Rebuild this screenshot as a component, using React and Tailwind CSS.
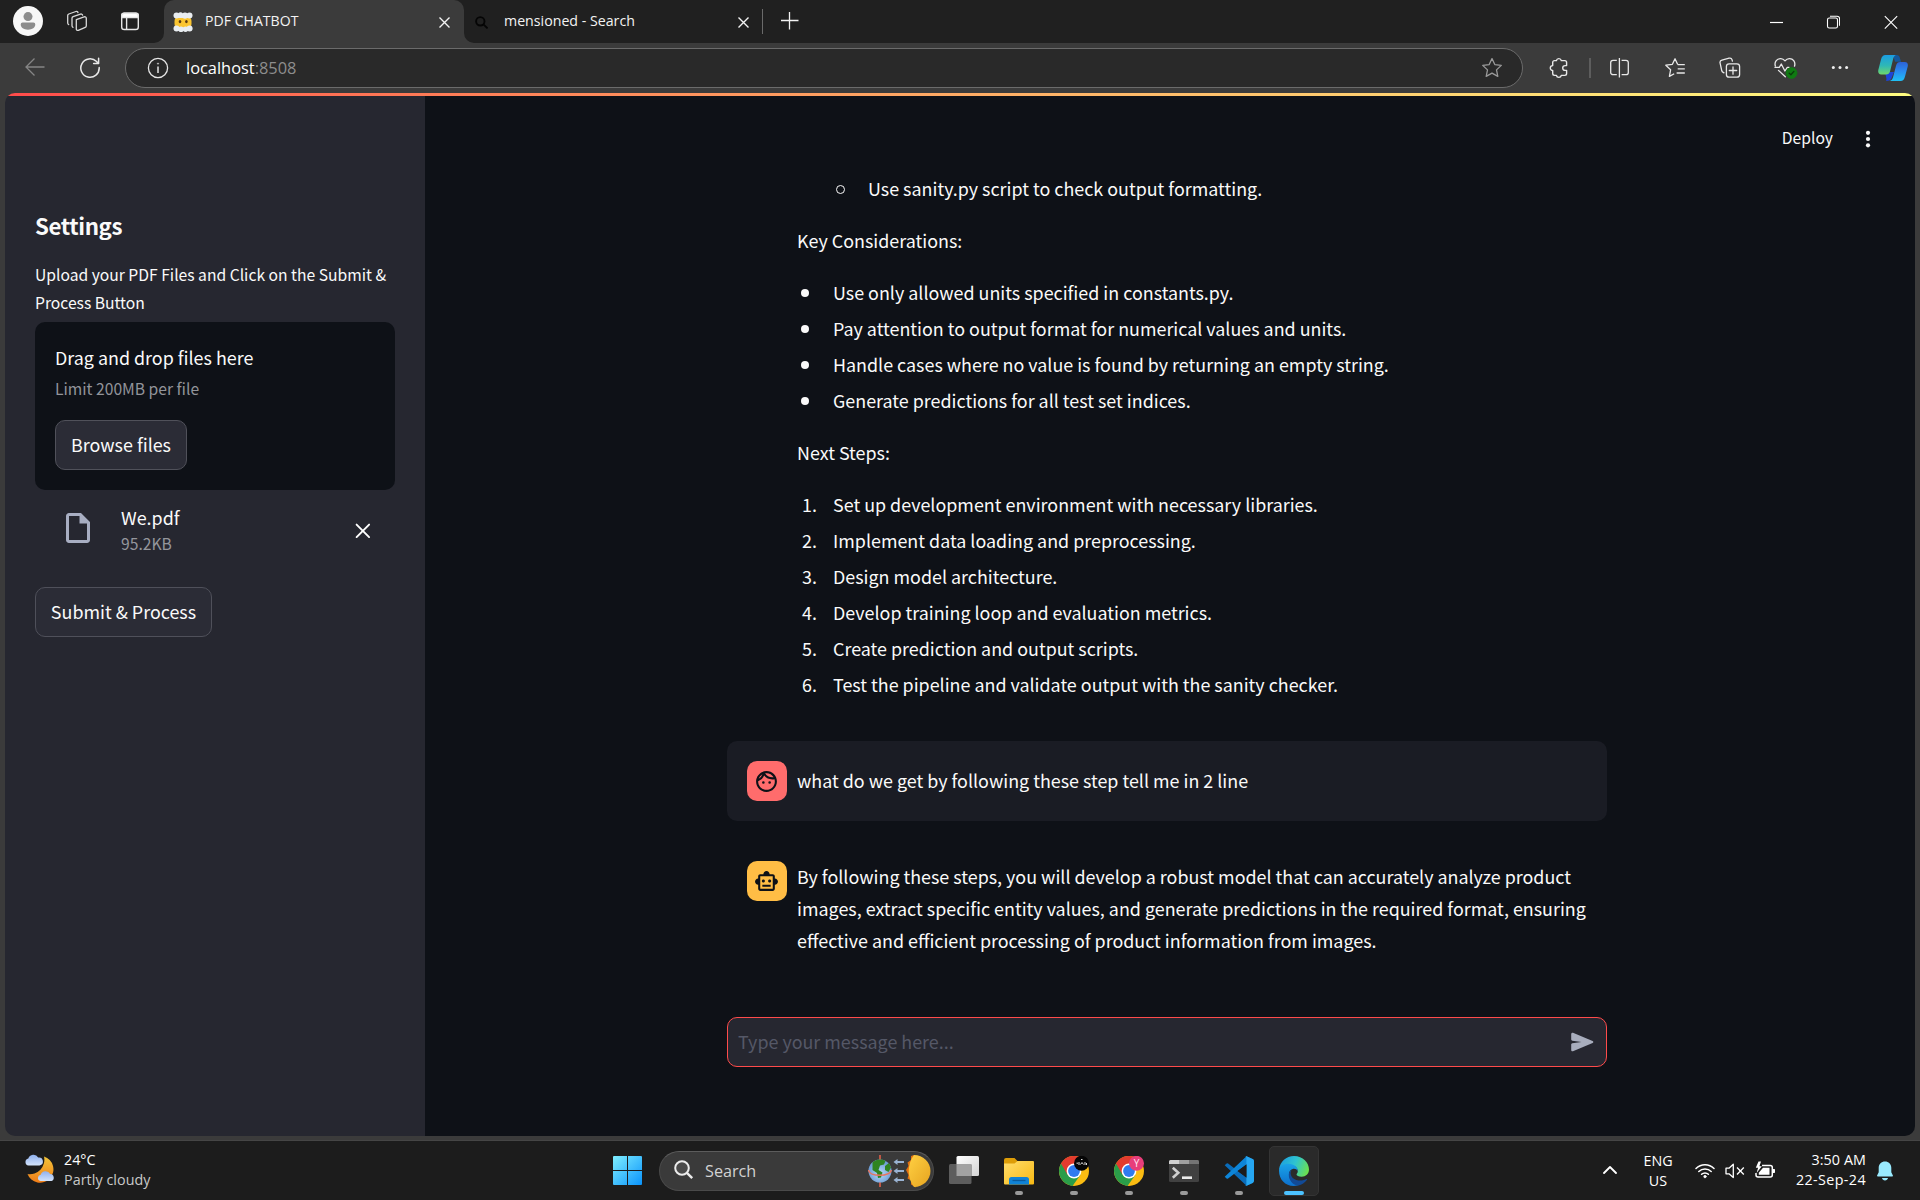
import React from 'react';
import { MdOutlineFace, MdOutlineSmartToy, MdOutlineInsertDriveFile } from 'react-icons/md';

const keyConsiderations = [
  'Use only allowed units specified in constants.py.',
  'Pay attention to output format for numerical values and units.',
  'Handle cases where no value is found by returning an empty string.',
  'Generate predictions for all test set indices.',
];

const nextSteps = [
  'Set up development environment with necessary libraries.',
  'Implement data loading and preprocessing.',
  'Design model architecture.',
  'Develop training loop and evaluation metrics.',
  'Create prediction and output scripts.',
  'Test the pipeline and validate output with the sanity checker.',
];

function CloseIcon({ className }) {
  return (
    <svg viewBox="0 0 13 13" className={className} fill="none" stroke="currentColor" strokeWidth="1.4">
      <path d="M1.5 1.5l10 10M11.5 1.5l-10 10" />
    </svg>
  );
}

function CloudFace() {
  return (
    <svg viewBox="0 0 20 20" className="h-5 w-5 shrink-0">
      <rect x="1.5" y="4" width="17" height="13" rx="5" fill="#fbc530" />
      <g fill="#e9edf1">
        <circle cx="3.5" cy="3.5" r="3" />
        <circle cx="7.5" cy="3" r="2.7" />
        <circle cx="12" cy="3.6" r="3.1" />
        <circle cx="16.5" cy="3.4" r="3" />
        <rect x="2" y="2" width="15" height="4" />
        <circle cx="3.5" cy="16.6" r="3" />
        <circle cx="8" cy="17.2" r="2.8" />
        <circle cx="12.5" cy="17.2" r="2.7" />
        <circle cx="16.6" cy="16.6" r="3" />
        <rect x="3" y="15.6" width="14" height="3" />
      </g>
      <ellipse cx="7" cy="9.6" rx="1.3" ry="1.7" fill="#5a3a12" />
      <ellipse cx="13.4" cy="9.6" rx="1.3" ry="1.7" fill="#5a3a12" />
    </svg>
  );
}

function TabStrip() {
  return (
    <div className="flex h-[43px] items-center bg-[#202020] text-[#f3f3f3]">
      <svg viewBox="0 0 30 30" className="-mt-px ml-[13px] h-[30px] w-[30px] shrink-0">
        <circle cx="15" cy="15" r="15" fill="#f7f7f7" />
        <circle cx="15" cy="10.6" r="4.5" fill="#8c8c8c" />
        <path d="M9.6 16.6h10.800a1.900 1.900 0 0 1 1.900 1.900c0 3.100-3 5.200-7.300 5.200s-7.300-2.100-7.300-5.200a1.900 1.900 0 0 1 1.900-1.900z" fill="#8c8c8c" />
      </svg>
      <svg viewBox="0 0 22 22" className="-mt-px ml-[23px] h-[22px] w-[22px] shrink-0" fill="none" stroke="#d8d8d8" strokeWidth="1.300" strokeLinejoin="round" strokeLinecap="round">
        <path d="M10.300 9.600l7.800-2.700c1.100-.4 2.200.3 2.200 1.500v7.300c0 .8-.4 1.400-1.100 1.700l-6.900 2.900c-1 .4-2-.3-2-1.400z" />
        <path d="M7 17.300c-.6-.2-1-.8-1-1.500V8.300c0-.8.400-1.300 1.100-1.600l7.400-2.600c1-.3 1.900.2 2.100 1.100" />
        <path d="M2.700 14.600c-.6-.2-1-.8-1-1.500V5.600c0-.8.400-1.300 1.100-1.600l7.100-2.500c1-.3 1.900.2 2.100 1.100" />
      </svg>
      <svg viewBox="0 0 24 24" className="-mt-px ml-[30px] h-6 w-6 shrink-0" fill="none" stroke="#e6e6e6" strokeWidth="1.400">
        <rect x="3.700" y="4.200" width="16.600" height="16.300" rx="2.600" />
        <path d="M3.700 6.800a2.600 2.600 0 0 1 2.600-2.600h11.400a2.600 2.600 0 0 1 2.600 2.600v1.700H3.700z" fill="#fff" />
        <path d="M8.600 8.500v12" />
      </svg>
      <div className="relative ml-[22px] flex h-[43px] w-[300px] shrink-0 items-center rounded-t-[10px] bg-[#3b3b3b] pr-[13px] pl-[9px]">
        <svg viewBox="0 0 10 10" className="absolute bottom-0 -left-[10px] h-[10px] w-[10px]"><path d="M10 0v10H0a10 10 0 0 0 10-10z" fill="#3b3b3b" /></svg>
        <svg viewBox="0 0 10 10" className="absolute -right-[10px] bottom-0 h-[10px] w-[10px]"><path d="M0 0v10h10A10 10 0 0 1 0 0z" fill="#3b3b3b" /></svg>
        <CloudFace />
        <span className="-mt-[2px] ml-3 text-[14.100px] leading-5 whitespace-nowrap">PDF CHATBOT</span>
        <CloseIcon className="mt-px ml-auto h-[13px] w-[13px]" />
      </div>
      <div className="flex h-[43px] w-[298px] shrink-0 items-center pr-[12px] pl-[11px]">
        <svg viewBox="0 0 13 13" className="mt-px h-[13px] w-[13px] shrink-0" fill="none" stroke="#050505" strokeWidth="1.900">
          <circle cx="5.300" cy="5.300" r="4.200" />
          <path d="M8.400 8.400l4.200 4" />
        </svg>
        <span className="-mt-[2px] ml-4 text-[14.200px] leading-5 whitespace-nowrap">mensioned - Search</span>
        <CloseIcon className="mt-px ml-auto h-[13px] w-[13px]" />
      </div>
      <div className="h-[25px] w-px bg-[#6a6a6a]" />
      <svg viewBox="0 0 18 18" className="-mt-px ml-[18px] h-[18px] w-[18px]" stroke="#f3f3f3" strokeWidth="1.300"><path d="M8.500 0v17.500M0 8.500h17.500" /></svg>
      <div className="ml-auto flex items-center pr-[22px]">
        <svg viewBox="0 0 14 14" className="h-[14px] w-[14px]" stroke="#fff" strokeWidth="1.200"><path d="M0 7.500h13" /></svg>
        <svg viewBox="0 0 14 14" className="ml-[42px] h-[14px] w-[14px]" fill="none" stroke="#fff" strokeWidth="1.100">
          <rect x="1.500" y="3" width="10" height="10" rx="1.800" />
          <path d="M4 1.200h7a2.600 2.600 0 0 1 2.600 2.600v7" />
        </svg>
        <svg viewBox="0 0 14 14" className="ml-[44px] h-[14px] w-[14px]" fill="none" stroke="#fff" strokeWidth="1.100"><path d="M.8 1.200l12.400 12.400M13.200 1.200L.8 13.600" /></svg>
      </div>
    </div>
  );
}

function Toolbar() {
  return (
    <div className="flex h-[50px] items-center bg-[#3b3b3b] text-[#e8e8e8]">
      <svg viewBox="0 0 22 22" className="ml-6 h-[22px] w-[22px] shrink-0" fill="none" stroke="#858585" strokeWidth="1.300"><path d="M20.500 10H2M10.500 1.500L2 10l8.500 8.500" /></svg>
      <svg viewBox="0 0 22 22" className="ml-[33px] h-[22px] w-[22px] shrink-0" fill="none" stroke="currentColor" strokeWidth="1.500" strokeLinecap="round" strokeLinejoin="round">
        <path d="M20.200 10.500a9.200 9.200 0 1 1-2.600-5.900l1.600 1.500" />
        <path d="M19.600 1.300v5.100h-5" />
      </svg>
      <div className="ml-6 flex h-10 w-[1398px] shrink-0 items-center rounded-full border border-[#6b6b6b] bg-[#292929] pr-[19px] pl-[21px]">
        <svg viewBox="0 0 22 22" className="h-[22px] w-[22px]" fill="none" stroke="#e6e6e6" strokeWidth="1.300">
          <circle cx="11" cy="11" r="9.600" />
          <path d="M11 9.500v6.500" strokeWidth="1.500" />
          <circle cx="11" cy="6.600" r=".7" fill="#e6e6e6" strokeWidth=".4" />
        </svg>
        <span className="ml-[17px] pb-px text-[16.400px] leading-6 text-white">localhost<span className="text-[#8d8d8d]">:8508</span></span>
        <svg viewBox="0 0 22 22" className="ml-auto h-[22px] w-[22px]" fill="none" stroke="#9a9a9a" strokeWidth="1.300" strokeLinejoin="round"><path d="M11 1.600l2.800 6 6.500.8-4.800 4.500 1.300 6.500-5.800-3.300-5.800 3.300 1.300-6.500L1.700 8.400l6.500-.8z" /></svg>
      </div>
      <svg viewBox="0 0 22 22" className="ml-[25px] h-[22px] w-[22px]" fill="none" stroke="currentColor" strokeWidth="1.400" strokeLinejoin="round">
        <path d="M8.400 3.600a2.500 2.500 0 0 1 4.900 0h3.500c1 0 1.800.8 1.800 1.800v3.200h-1.500a2.400 2.400 0 0 0 0 4.800h1.500v3.200c0 1-.8 1.800-1.800 1.800h-3.500a2.500 2.500 0 0 1-4.900 0H6.500c-1 0-1.800-.8-1.800-1.800v-3.200a2.400 2.400 0 0 1 0-4.800V5.400c0-1 .8-1.800 1.800-1.800z" />
      </svg>
      <div className="ml-[19px] h-5 w-[2px] bg-[#5d5d5d]" />
      <svg viewBox="0 0 22 22" className="ml-[18px] h-[22px] w-[22px]" fill="none" stroke="currentColor" strokeWidth="1.300">
        <path d="M7.800 3.300H4a2.300 2.300 0 0 0-2.300 2.300v9.800A2.300 2.300 0 0 0 4 17.700h3.800M12.600 3.300h4.400a2.300 2.300 0 0 1 2.300 2.300v9.800a2.300 2.300 0 0 1-2.300 2.300h-4.400M10.400 1v19.500" />
      </svg>
      <svg viewBox="0 0 22 22" className="ml-[33px] h-[22px] w-[22px]" fill="none" stroke="currentColor" strokeWidth="1.300" strokeLinejoin="round">
        <path d="M13.700 7.600H20.800M13.700 11.800H20.800M12.600 16h8.200M13.700 7.600L11 1.800 8.400 7.300l-6.600.9 4.800 4.600-1.200 6.600 4.800-2.600" />
      </svg>
      <svg viewBox="0 0 22 22" className="ml-[33px] h-[22px] w-[22px]" fill="none" stroke="currentColor" strokeWidth="1.300" strokeLinecap="round" strokeLinejoin="round">
        <path d="M5 15.800l-.8-.4a2.500 2.500 0 0 1-1.400-1.600L1.100 6.100a2.500 2.500 0 0 1 1.800-3l7.200-1.900a2.500 2.500 0 0 1 3 1.700l.3 1.200" />
        <rect x="7.400" y="6.900" width="13.200" height="13.200" rx="2.700" />
        <path d="M14 9.800v7.400M10.300 13.500h7.400" />
      </svg>
      <svg viewBox="0 0 24 24" className="ml-[33px] h-6 w-6" fill="none" stroke="currentColor" strokeWidth="1.300" strokeLinecap="round" strokeLinejoin="round">
        <path d="M1.400 10.200C-.1 5.600 3.300 2.400 6.800 2.600c2 .1 3.200 1.100 4.200 2.300 1-1.200 2.300-2.200 4.300-2.300 3.500-.2 6.600 3 5.200 7.600" />
        <path d="M1 11.400h4.300l2-3.400 3.600 7 2.400-3.700h1.800M4.500 14.400l6.800 6.400" />
        <circle cx="17.500" cy="17" r="5.500" fill="#0f7a12" stroke="#0f7a12" strokeWidth=".6" />
        <path d="M15.200 17.200l1.700 1.600 3-3.400" stroke="#0a3a0c" strokeWidth="1.300" />
      </svg>
      <svg viewBox="0 0 22 22" className="ml-[31px] h-[22px] w-[22px]" fill="#f0f0f0"><circle cx="4.300" cy="10.600" r="1.500" /><circle cx="11" cy="10.600" r="1.500" /><circle cx="17.600" cy="10.600" r="1.500" /></svg>
      <svg viewBox="0 0 30 28" className="ml-[27px] h-7 w-[30px] shrink-0">
        <defs>
          <linearGradient id="cpA" x1="0" y1="0" x2="0" y2="1"><stop offset="0" stopColor="#1b9de2" /><stop offset=".55" stopColor="#2fb8b5" /><stop offset="1" stopColor="#6fd66b" /></linearGradient>
          <linearGradient id="cpB" x1="0" y1="0" x2="0" y2="1"><stop offset="0" stopColor="#2c62d6" /><stop offset=".5" stopColor="#2a8cf0" /><stop offset="1" stopColor="#1fc0f4" /></linearGradient>
        </defs>
        <path d="M15 1h3.500c2 0 2.800 1 3.300 2.800l1.200 4h-6z" fill="#14579c" />
        <path d="M8 27c3 0 5-1 6-4l2-5H7l1.300 6c.3 1.500 0 3-.3 3z" fill="#1d44d8" />
        <path d="M7.500 1h10.300c-1.600.8-2.300 2.500-2.800 4.500l-3 12c-.6 2-1.800 3-4 3H3.200C.8 20.500-.2 18.800.3 16L3 5.500C3.800 2.500 5 1 7.500 1z" fill="url(#cpA)" />
        <path d="M22.300 8h4.500c2.400 0 3.500 1.700 2.900 4.500l-2.700 10c-.8 3-2 4.500-4.500 4.500H11.500c2-.5 3-1.800 3.600-4l3-11.500C18.800 9 20 8 22.300 8z" fill="url(#cpB)" />
      </svg>
    </div>
  );
}

function Sidebar() {
  return (
    <aside className="flex w-[420px] shrink-0 flex-col bg-[#262730] px-[30px] pt-[114px] text-[17.900px] text-[#fafafa]">
      <h2 className="text-[22.300px] leading-[30px] font-bold tracking-[-0.4px] text-[#fafafa]">Settings</h2>
      <p className="mt-[21px] text-[15.660px] leading-7">
        Upload your PDF Files and Click on the Submit &amp; <br />
        Process Button
      </p>
      <section className="mt-[5px] flex h-[168px] flex-col items-start rounded-[10px] bg-[#0e1117] pt-[19px] pl-5">
        <span className="leading-8">Drag and drop files here</span>
        <span className="mt-[3px] text-[15.660px] leading-[26px] text-[#92949a]">Limit 200MB per file</span>
        <button className="mt-[18px] flex h-[50px] w-[132px] items-center justify-center rounded-[10px] border border-[#50515a] bg-[#2b2c36] pb-[2px]">Browse files</button>
      </section>
      <div className="flex h-[97px] pt-[14px] pl-[25px]">
        <MdOutlineInsertDriveFile className="mt-[6px] h-9 w-9 text-[#a8aec2]" />
        <div className="ml-[25px] flex flex-col gap-px">
          <span className="leading-[26px]">We.pdf</span>
          <span className="text-[15.660px] leading-[26px] text-[#95969c]">95.2KB</span>
        </div>
        <svg viewBox="0 0 16 16" className="mt-[19px] mr-[24px] ml-auto h-4 w-4" stroke="#fff" strokeWidth="1.900" strokeLinecap="round"><path d="M1.600 1.600l12.500 12.500M14.100 1.600L1.600 14.100" /></svg>
      </div>
      <button className="flex h-[50px] w-[177px] items-center justify-center rounded-[10px] border border-[#4f505a] bg-[#2b2c36] pb-[2px]">Submit &amp; Process</button>
    </aside>
  );
}

function Chat() {
  return (
    <main className="relative flex flex-1 flex-col bg-[#0e1117] pl-[302px] text-[17.900px] text-[#fafafa]">
      <div className="absolute top-[27px] right-[42px] flex h-8 items-center">
        <span className="pb-[2px] text-[15.660px]">Deploy</span>
        <svg viewBox="0 0 10 20" className="ml-[30px] h-5 w-[10px]" fill="#fafafa"><circle cx="5" cy="3.800" r="2.100" /><circle cx="5" cy="10" r="2.100" /><circle cx="5" cy="16.300" r="2.100" /></svg>
      </div>
      <div className="flex flex-col gap-5 pt-[76px] pl-[70px] leading-8">
        <ul className="flex pl-9">
          <li className="flex items-center gap-[23px]">
            <span className="mt-[2px] ml-[3px] h-[9px] w-[9px] rounded-full border border-[#fafafa]" />
            Use sanity.py script to check output formatting.
          </li>
        </ul>
        <p>Key Considerations:</p>
        <ul className="flex flex-col gap-1">
          {keyConsiderations.map((item) => (
            <li key={item} className="flex items-center gap-[24px] pl-1">
              <span className="mt-[2px] h-2 w-2 rounded-full bg-[#fafafa]" />
              {item}
            </li>
          ))}
        </ul>
        <p>Next Steps:</p>
        <ol className="flex flex-col gap-1">
          {nextSteps.map((item, i) => (
            <li key={item} className="flex">
              <span className="w-[20px] text-right">{i + 1}.</span>
              <span className="ml-[16px]">{item}</span>
            </li>
          ))}
        </ol>
      </div>
      <div className="mt-[41px] flex h-20 w-[880px] items-center rounded-[10px] bg-[#1a1c24] pl-5">
        <div className="flex h-10 w-10 items-center justify-center rounded-[10px] bg-[#ff6c6c] pr-px"><MdOutlineFace className="h-[25px] w-[25px] text-[#0e1117]" /></div>
        <span className="ml-[10px] pb-[2px] leading-8">what do we get by following these step tell me in 2 line</span>
      </div>
      <div className="mt-10 flex w-[880px] pl-5">
        <div className="flex h-10 w-10 shrink-0 items-center justify-center rounded-[10px] bg-[#ffbd45] pr-px"><MdOutlineSmartToy className="h-[25px] w-[25px] text-[#0e1117]" /></div>
        <p className="-mt-px ml-[10px] leading-8">
          By following these steps, you will develop a robust model that can accurately analyze product<br />
          images, extract specific entity values, and generate predictions in the required format, ensuring<br />
          effective and efficient processing of product information from images.
        </p>
      </div>
      <div className="mt-[61px] flex h-[50px] w-[880px] items-center justify-between rounded-[10px] border border-[#ff4b4b] bg-[#262730] pr-[12px] pl-[10px] text-[#555867]">
        <span className="pb-px">Type your message here...</span>
        <svg viewBox="0 0 24 20" className="h-5 w-6"><path d="M1.200 2v5.600c0 .6.500 1 1.100 1.200L11.500 10l-9.200 1.200c-.6.100-1.100.6-1.100 1.200V18c0 1 .9 1.600 1.800 1.200L22.600 11c1-.4 1-1.600 0-2L3 .8C2.100.4 1.200 1.100 1.200 2z" fill="#a8adbd" /></svg>
      </div>
    </main>
  );
}

function Chrome({ children }) {
  return (
    <svg viewBox="0 0 30 30" className="h-[30px] w-[30px]">
      <circle cx="15" cy="15" r="15" fill="#fbbc12" />
      <path d="M15 15L2 7.500A15 15 0 0 0 13.500 29.900L21.500 18.700z" fill="#2a9d49" />
      <path d="M2 7.500A15 15 0 0 1 28 7.500H15l-6.500 11.300z" fill="#e33b2e" />
      <circle cx="15" cy="15" r="7.400" fill="#fff" />
      <circle cx="15" cy="15" r="5.900" fill="#2f7bf0" />
      {children}
    </svg>
  );
}

function TaskItem({ children, active, running }) {
  return (
    <div className="flex h-[59px] w-[55px] shrink-0 items-center justify-center">
      <div className={active ? 'relative flex h-[50px] w-[50px] items-center justify-center rounded-[5px] border border-[#343434] bg-[#2a2a2a]' : 'relative flex h-[50px] w-[50px] items-center justify-center'}>
        {children}
        {active && <span className="absolute bottom-0 h-1 w-5 rounded-full bg-[#4cc2ff]" />}
        {running && <span className="absolute bottom-px h-1 w-2 rounded-full bg-[#9a9a9a]" />}
      </div>
    </div>
  );
}

function Taskbar() {
  return (
    <div className="flex h-[59px] items-center bg-[#1c1c1c] text-[14.300px] leading-5 text-white">
      <div className="flex w-[613px] shrink-0 items-center pl-[25px]">
        <svg viewBox="0 0 30 30" className="-mt-[5px] h-[30px] w-[30px]">
          <defs>
            <linearGradient id="moon" x1="0" y1="0" x2="0" y2="1"><stop offset="0" stopColor="#f2c53a" /><stop offset="1" stopColor="#f07c17" /></linearGradient>
            <linearGradient id="cloud" x1="0" y1="0" x2="0" y2="1"><stop offset="0" stopColor="#8fb0ee" /><stop offset="1" stopColor="#d3e3fb" /></linearGradient>
          </defs>
          <path d="M19 3.500a13.400 13.400 0 1 1-16.500 17.500A14.500 14.500 0 0 0 19 3.500z" fill="url(#moon)" />
          <path d="M3.500 12.500a3.500 3.500 0 0 1-.2-6.900A5.400 5.400 0 0 1 13.200 4.500a4 4 0 0 1 1.300 8z" fill="url(#cloud)" />
          <path d="M15.500 28a3.200 3.200 0 0 1 .2-6.300 5.200 5.200 0 0 1 9.500-.8 3.700 3.700 0 0 1 1.300 7.100z" fill="url(#cloud)" />
        </svg>
        <div className="-mt-[2px] ml-[9px] flex flex-col">
          <span>24°C</span>
          <span className="tracking-[0.06px] text-[#c9c9c9]">Partly cloudy</span>
        </div>
      </div>
      <svg viewBox="0 0 29 29" className="h-[29px] w-[29px] shrink-0">
        <defs><linearGradient id="win" x1="0" y1="0" x2="1" y2="1"><stop offset="0" stopColor="#7fefff" /><stop offset="1" stopColor="#0a93fb" /></linearGradient></defs>
        <path d="M1 0h13v14H0V1a1 1 0 0 1 1-1zM15 0h13a1 1 0 0 1 1 1v13H15zM0 15h14v14H1a1 1 0 0 1-1-1zM15 15h14v13a1 1 0 0 1-1 1H15z" fill="url(#win)" />
      </svg>
      <div className="ml-[17px] flex h-10 w-[275px] shrink-0 items-center rounded-full border border-[#4a4a4a] border-t-[#5c5c5c] bg-[#3a3a3a] pr-[2px] pl-[14px]">
        <svg viewBox="0 0 20 20" className="-mt-px h-5 w-5" fill="none" stroke="#ececec" strokeWidth="2"><circle cx="8" cy="8" r="6.800" fill="#4a4a4a" /><path d="M12.900 12.900l5.300 5.300" strokeWidth="2.400" /></svg>
        <span className="ml-[11px] text-[16.200px] text-[#d2d2d2]">Search</span>
        <svg viewBox="0 0 63 34" className="ml-auto h-[34px] w-[63px]">
          <defs>
            <radialGradient id="globe" cx=".5" cy=".6"><stop offset="0" stopColor="#b8dcfa" /><stop offset="1" stopColor="#6f9ed6" /></radialGradient>
            <linearGradient id="sun" x1="0" y1="0" x2="1" y2="1"><stop offset="0" stopColor="#ffd042" /><stop offset="1" stopColor="#e6a420" /></linearGradient>
          </defs>
          <path d="M12 1v32" stroke="#e0604a" strokeWidth="1.600" />
          <circle cx="12" cy="17" r="11.500" fill="url(#globe)" />
          <path d="M4.500 8.500C8 4.800 14 4.800 17.500 7l-1.500 3.500-4 1-1.500 4.500 4 2.500-1.500 5-3 .5-1-5-4.500-3z" fill="#2f8421" />
          <path d="M17 12l4-3 2 4.500-2.500 4.500-3.500-2z" fill="#2f8421" />
          <path d="M.5 16c1 7 21 7 23 0" fill="none" stroke="#e8745f" strokeWidth="1.500" />
          <g fill="#9ab3d3">
            <path d="M25.500 8l4-3v2h6.500v2h-6.500v2zM25.500 17l4-3v2h6.500v2h-6.500v2zM25.500 26l4-3v2h6.500v2h-6.500v2z" />
          </g>
          <path d="M46 1l-3 1v4l-3.500 2.500 1 3.500-2.500 4 2.500 5-1 3.500 3.500 2v4l5 3z" fill="#e2700f" />
          <path d="M46 1c9 0 16.500 7 16.500 16S55 33 46 33c-7-9-7-23 0-32z" fill="url(#sun)" />
        </svg>
      </div>
      <div className="ml-[2px] flex">
        <TaskItem>
          <svg viewBox="0 0 30 28" className="mb-px h-7 w-[30px]">
            <defs><linearGradient id="tv" x1="0" y1="0" x2="1" y2="1"><stop offset="0" stopColor="#fff" /><stop offset="1" stopColor="#d4d4d4" /></linearGradient></defs>
            <rect x="7.500" y="0" width="22.500" height="20" rx="1.500" fill="url(#tv)" />
            <rect x="0" y="8" width="22.500" height="20" rx="1.500" fill="#5d5d5d" />
            <path d="M7.500 8h15v12h-15z" fill="#a2a2a2" />
          </svg>
        </TaskItem>
        <TaskItem running>
          <svg viewBox="0 0 30 28" className="h-7 w-[30px]">
            <defs><linearGradient id="fold" x1="0" y1="0" x2="1" y2="1"><stop offset="0" stopColor="#ffdd6c" /><stop offset="1" stopColor="#f8b913" /></linearGradient></defs>
            <path d="M0 3a2 2 0 0 1 2-2h8.500l3 3H28v6H0z" fill="#dd9d08" />
            <path d="M0 6.500h10.500l3-2.500H29a1 1 0 0 1 1 1v21.500a1 1 0 0 1-1 1H1a1 1 0 0 1-1-1z" fill="url(#fold)" />
            <path d="M5 22.500a2.500 2.500 0 0 1 2.500-2.500h15a2.500 2.500 0 0 1 2.500 2.500v5H5z" fill="#1083d6" />
            <path d="M8.500 23.500h13" stroke="#0a5a9c" strokeWidth="1.300" />
          </svg>
        </TaskItem>
        <TaskItem running>
          <Chrome>
            <circle cx="22.500" cy="7.300" r="7.500" fill="#050505" />
            <path d="M17.500 7.200h1.500M20 6v3M21.500 8.500l1.500-2 1.500 2M26 6v3M27.500 7v2M22 3.500h1.500" stroke="#d8d8d8" strokeWidth="1" fill="none" />
          </Chrome>
        </TaskItem>
        <TaskItem running>
          <Chrome>
            <circle cx="22.500" cy="7.300" r="7.500" fill="#e83e7a" />
            <text x="22.500" y="11" textAnchor="middle" fontSize="10" fill="#ffe9f1">Y</text>
          </Chrome>
        </TaskItem>
        <TaskItem running>
          <svg viewBox="0 0 30 22" className="h-[22px] w-[30px]">
            <rect width="30" height="22" rx="1.500" fill="#414141" />
            <path d="M1.500 0H10v4H0V1.500A1.500 1.500 0 0 1 1.500 0z" fill="#d0d0d0" />
            <path d="M10 0h10v4H10z" fill="#a0a0a0" /><path d="M20 0h8.500A1.500 1.500 0 0 1 30 1.500V4H20z" fill="#747474" />
            <path d="M3.800 7.800l5.500 5-5.500 5" fill="none" stroke="#cfcfcf" strokeWidth="2.600" />
            <path d="M13 17.700h10" stroke="#ececec" strokeWidth="2.600" />
          </svg>
        </TaskItem>
        <TaskItem running>
          <svg viewBox="0 0 30 30" className="h-[30px] w-[30px]">
            <path d="M.7 9.300L2.600 7.600a1.200 1.200 0 0 1 1.500 0L29 26.500l-6.500 3.300z" fill="#0a6cba" />
            <path d="M.7 20.700l1.900 1.700a1.200 1.200 0 0 0 1.500 0L29 3.500 22.500.2z" fill="#0d85d8" />
            <path d="M22.500.2l6.300 2.900c.7.400 1.200 1 1.200 1.800v20.200c0 .8-.5 1.400-1.200 1.800l-6.300 2.900c-.8.300-1.500.1-2-.4.800.6 1.900.1 1.900-1V1.600c0-1.100-1.100-1.600-1.900-1 .5-.5 1.200-.7 2-.4z" fill="#26a7f2" />
            <path d="M22.400 8.500v13L13.500 15z" fill="#1c1c1c" />
          </svg>
        </TaskItem>
        <TaskItem active>
          <svg viewBox="0 0 30 30" className="h-[30px] w-[30px]">
            <defs>
              <linearGradient id="edTop" x1="0" y1=".3" x2="1" y2=".6"><stop offset="0" stopColor="#1c9fe0" /><stop offset=".5" stopColor="#2fc3d0" /><stop offset="1" stopColor="#6be04f" /></linearGradient>
              <linearGradient id="edLeft" x1="0" y1="0" x2="0" y2="1"><stop offset="0" stopColor="#1aa3e8" /><stop offset="1" stopColor="#0d6fcc" /></linearGradient>
            </defs>
            <path d="M.1 13.500C1 5.500 7.200 0 15 0c9 0 15 6.500 15 13.500 0 4.500-3.300 7.200-7.300 7.200-3.200 0-5.200-1.200-5.200-2.200 0-.7 1.300-1.300 1.300-3.500 0-3.500-3.500-5.800-8-5.800-5 0-9 1.800-10.700 4.300z" fill="url(#edTop)" />
            <path d="M.1 13.500C1 10 4.500 7.800 9 7.800c5.500 0 9.800 3 9.800 7.200-1-2-3-2.600-4.500-2.300-3 .6-4.600 3.200-4.300 6 .5 5 5 9.300 9.500 10.600C8 32.500-.8 24 .1 13.500z" fill="url(#edLeft)" />
            <path d="M12.500 14c-2.500 4 .5 9.700 7 10.500 3.300.4 6.500-.8 8-1.500.5-.2.900.3.500.8-2 3-5.300 5-8.500 5.600C14 29.500 9.500 24 9.800 18.500c.1-2 1-3.500 2.700-4.500z" fill="#124a96" />
          </svg>
        </TaskItem>
      </div>
      <svg viewBox="0 0 14 10" className="-mt-px ml-auto h-[10px] w-[14px]" fill="none" stroke="#fff" strokeWidth="1.800" strokeLinecap="round" strokeLinejoin="round"><path d="M1 8l6-6 6 6" /></svg>
      <div className="ml-[21px] flex w-10 flex-col text-center"><span>ENG</span><span>US</span></div>
      <svg viewBox="0 0 20 20" className="ml-[17px] h-5 w-5" fill="none" stroke="#fff" strokeWidth="1.500" strokeLinecap="round">
        <path d="M1 7.500a12.700 12.700 0 0 1 18 0M3.800 10.500a8.800 8.800 0 0 1 12.400 0M6.600 13.300a4.800 4.800 0 0 1 6.800 0" />
        <circle cx="10" cy="15.600" r="1.300" fill="#fff" strokeWidth=".5" />
      </svg>
      <svg viewBox="0 0 20 20" className="ml-[10px] h-5 w-5" fill="none" stroke="#fff" strokeWidth="1.300" strokeLinejoin="round">
        <path d="M1 7.200h3L8.300 3.200v13.400L4 12.800H1zM12 6.500l6.800 7M18.800 6.500l-6.800 7" />
      </svg>
      <svg viewBox="0 0 20 18" className="mt-[-2px] ml-[10px] h-[18px] w-5">
        <path d="M7 4.500h8.300a2 2 0 0 1 2 2V14a2 2 0 0 1-2 2H3a2 2 0 0 1-2-2v-2" fill="none" stroke="#fff" strokeWidth="1.500" />
        <path d="M8 6.800h6.500v7H3.800v-2zM18 8h1.300c.5 0 .7.300.7.700v2.600c0 .4-.2.700-.7.700H18z" fill="#fff" />
        <path d="M3.500.5L.8 6.800h2.300L1.600 12l5.200-6.800H4.400L6 .5z" fill="#fff" />
      </svg>
      <div className="-mt-[2px] ml-[11px] flex w-20 flex-col text-right whitespace-nowrap"><span className="tracking-[0.1px]">3:50 AM</span><span className="tracking-[0.4px]">22-Sep-24</span></div>
      <svg viewBox="0 0 18 20" className="mr-[26px] ml-[10px] h-5 w-[18px]" fill="#99ebff">
        <path d="M9 .5c3.600 0 6.300 2.700 6.300 6.300v4.500l1.600 3.300c.2.500-.1.900-.6.900H1.700c-.5 0-.8-.4-.6-.9l1.600-3.300V6.800C2.700 3.200 5.400.5 9 .5zM6 17h6c-.3 1.500-1.500 2.500-3 2.500S6.300 18.500 6 17z" />
      </svg>
    </div>
  );
}

export default function App() {
  return (
    <div className="flex h-[1200px] w-[1920px] flex-col overflow-hidden bg-[#3b3b3b] font-['Open_Sans','Noto_Sans',sans-serif]">
      <TabStrip />
      <Toolbar />
      <div className="mx-[5px] flex h-[1043px] flex-col overflow-hidden rounded-[10px] font-['Noto_Sans_CJK_SC','Noto_Sans',sans-serif]">
        <div className="h-[3px] shrink-0 bg-linear-to-r from-[#ff4b4b] to-[#fffd80]" />
        <div className="flex flex-1">
          <Sidebar />
          <Chat />
        </div>
      </div>
      <div className="h-[5px] border-b border-[#454545]" />
      <Taskbar />
    </div>
  );
}
